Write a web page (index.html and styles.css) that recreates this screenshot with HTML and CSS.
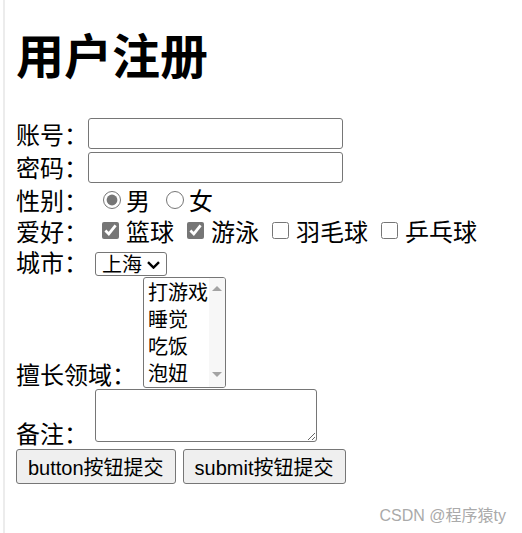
FILE: index.html
```html
<!DOCTYPE html>
<html lang="zh-CN">
<head>
  <meta charset="UTF-8">
  <meta name="viewport" content="width=device-width, initial-scale=1.0">
  <title>用户注册</title>
  <link rel="stylesheet" href="styles.css">
</head>
<body>
  <div class="page">
    <h1 class="title">用户注册</h1>
    <form class="reg-form" action="#">
      <div class="row row-account">
        <label class="label">账号：</label>
        <input type="text" class="text-input">
      </div>
      <div class="row row-password">
        <label class="label">密码：</label>
        <input type="password" class="text-input">
      </div>
      <div class="row row-sex">
        <span class="label">性别：</span>
        <label class="choice radio"><input type="radio" name="sex" checked>男</label>
        <label class="choice radio"><input type="radio" name="sex">女</label>
      </div>
      <div class="row row-hobby">
        <span class="label">爱好：</span>
        <label class="choice check"><input type="checkbox" checked>篮球</label>
        <label class="choice check"><input type="checkbox" checked>游泳</label>
        <label class="choice check"><input type="checkbox">羽毛球</label>
        <label class="choice check"><input type="checkbox">乒乓球</label>
      </div>
      <div class="row row-city">
        <label class="label">城市：</label>
        <span class="select-wrap">
          <select class="city-select">
            <option>上海</option>
            <option>北京</option>
            <option>广州</option>
          </select>
          <svg class="chevron" width="13" height="8" viewBox="0 0 13 8">
            <path d="M1 1.2 L6.5 6.6 L12 1.2" fill="none" stroke="#000" stroke-width="2.4"/>
          </svg>
        </span>
      </div>
      <div class="row row-field">
        <span class="label">擅长领域：</span>
        <div class="listbox">
          <ul class="listbox-options">
            <li>打游戏</li>
            <li>睡觉</li>
            <li>吃饭</li>
            <li>泡妞</li>
          </ul>
          <div class="listbox-bar">
            <span class="arrow-up"></span>
            <span class="arrow-down"></span>
          </div>
        </div>
      </div>
      <div class="row row-note">
        <label class="label">备注：</label>
        <textarea class="note"></textarea>
      </div>
      <div class="row row-buttons">
        <button type="button" class="btn">button按钮提交</button>
        <button type="submit" class="btn">submit按钮提交</button>
      </div>
    </form>
  </div>
  <div class="watermark">CSDN @程序猿ty</div>
</body>
</html>
```

FILE: styles.css
```css
*{
  margin: 0;
  padding: 0;
}
html,body{
  background: #fff;
}
body{
  font-family: "Noto Sans CJK SC", "Liberation Sans", sans-serif;
  color: #000;
}
.page{
  margin-left: 3px;
  border-left: 2px solid #ececec;
  padding: 29px 0 0 11px;
  min-height: 100vh;
  box-sizing: border-box;
}
.title{
  font-size: 48px;
  line-height: 48px;
  font-weight: bold;
  margin-bottom: 40px;
}
.row{
  display: flex;
  align-items: center;
}
.label{
  font-size: 24px;
  line-height: 24px;
  white-space: nowrap;
}
.row-account{ height: 33px; }
.row-password{ height: 34px; }
.row-sex,.row-hobby,.row-city{ height: 31px; }
.text-input{
  width: 255px;
  height: 31px;
  box-sizing: border-box;
  border: 1px solid #767676;
  border-radius: 3px;
  padding: 0 3px;
  font-size: 20px;
  background: #fff;
}
.choice{
  display: flex;
  align-items: center;
  font-size: 24px;
  line-height: 24px;
}
.choice input{
  margin: 0;
  accent-color: #767676;
}
.radio input{
  width: 18px;
  height: 18px;
  margin-right: 5px;
}
.radio{ margin-left: 16px; }
.radio:nth-of-type(1){ margin-left: 15px; }
.check input{
  width: 17px;
  height: 17px;
  margin-right: 7px;
}
.check{ margin-left: 13px; }
.check:nth-of-type(1){ margin-left: 14px; }
.select-wrap{
  position: relative;
  align-self: flex-end;
  margin: 0 0 1px 7px;
  display: flex;
}
.city-select{
  -webkit-appearance: none;
  appearance: none;
  width: 72px;
  height: 24px;
  box-sizing: border-box;
  border: 1px solid #767676;
  border-radius: 3px;
  padding: 0 0 0 6px;
  font-family: "Noto Sans CJK SC", sans-serif;
  font-size: 20px;
  line-height: 20px;
  background: #fff;
  color: #000;
}
.chevron{
  position: absolute;
  left: 52px;
  top: 9px;
  pointer-events: none;
}
.row-field .label{
  align-self: flex-end;
  margin-bottom: 2px;
}
.listbox{
  display: flex;
  width: 83px;
  height: 111px;
  box-sizing: border-box;
  margin-left: 7px;
  border: 1px solid #767676;
  border-radius: 3px;
  overflow: hidden;
  background: #fff;
}
.listbox-options{
  flex: 1;
  list-style: none;
  padding-left: 4px;
  font-size: 20px;
  line-height: 27px;
  white-space: nowrap;
  overflow: hidden;
}
.listbox-bar{
  width: 16px;
  background: #f7f7f7;
  display: flex;
  flex-direction: column;
  justify-content: space-between;
  align-items: center;
  padding: 8px 0 10px;
}
.arrow-up,.arrow-down{
  width: 0;
  height: 0;
  border-left: 5px solid transparent;
  border-right: 5px solid transparent;
}
.arrow-up{ border-bottom: 5px solid #a3a3a3; }
.arrow-down{ border-top: 5px solid #a3a3a3; }
.row-note{
  height: 56px;
  margin-top: 1px;
  align-items: flex-start;
}
.row-note .label{
  align-self: flex-end;
}
.note{
  width: 222px;
  height: 53px;
  box-sizing: border-box;
  margin-left: 7px;
  border: 1px solid #767676;
  border-radius: 3px;
  padding: 2px;
  font-size: 20px;
}
.row-buttons{
  margin-top: 4px;
}
.btn{
  height: 35px;
  padding: 0 11px;
  margin-right: 7px;
  background: #efefef;
  border: 1px solid #767676;
  border-radius: 3px;
  font-family: "Liberation Sans", "Noto Sans CJK SC", sans-serif;
  font-size: 20px;
  color: #000;
}
.watermark{
  position: absolute;
  right: 16px;
  bottom: 9px;
  font-family: "Liberation Sans", "Noto Sans CJK SC", sans-serif;
  font-size: 16px;
  line-height: 16px;
  color: #aaa;
}
```
